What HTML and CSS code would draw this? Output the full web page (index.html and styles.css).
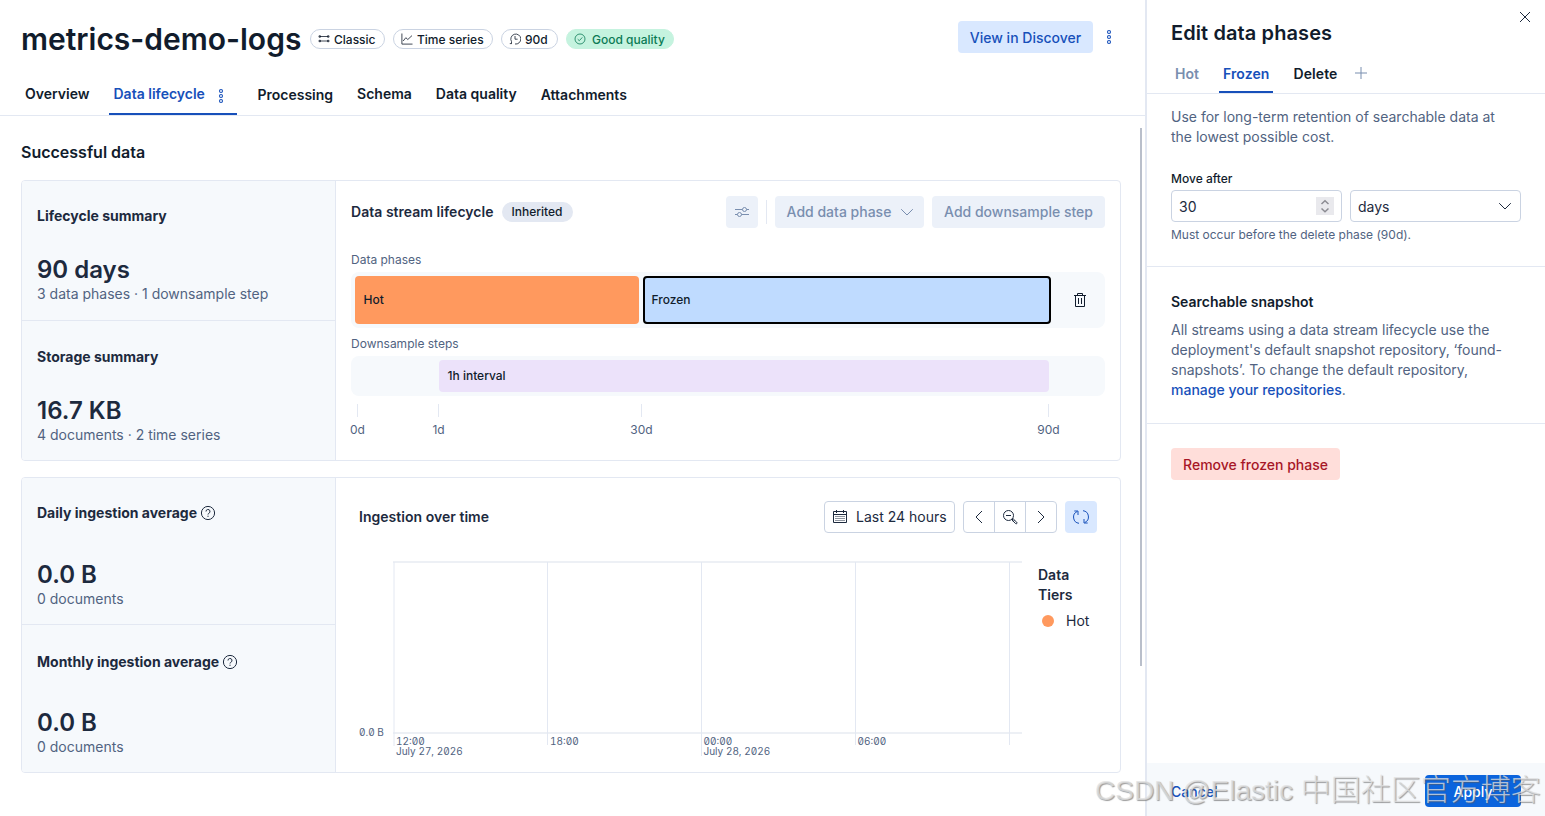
FILE: index.html
```html
<!DOCTYPE html>
<html lang="en">
	<head>
		<meta charset="utf-8">
		<title>metrics-demo-logs - Streams</title>
		<link rel="stylesheet" href="styles.css">
	</head>
	<body>

		<!--
			Stream page: header, tabs and the lifecycle panels
		-->

		<main>
			<header>
				<div class="titleRow">
					<h1>metrics-demo-logs</h1>
					<span class="badge classic">
						<svg width="12" height="12" viewBox="0 0 12 12"><path d="M1.5 3.500h9M1.500 8h9"/><path d="M1 2.800h1.500v1.400H1zM9.500 2.800H11v1.400H9.500zM1 7.300h1.500v1.400H1zM9.500 7.300H11v1.400H9.500z"/></svg>
						Classic
					</span>
					<span class="badge series">
						<svg width="12" height="12" viewBox="0 0 12 12"><path d="M.9.5v10.600h10.600M2.200 8l2.600-3.300 2 1.800L11 2.600"/></svg>
						Time series
					</span>
					<span class="badge retention">
						<svg width="12" height="12" viewBox="0 0 12 12"><path d="M2.500 10.600v-2A5 5 0 1 1 6 11M.8 10.600h2M6 3v3.200h2.600"/></svg>
						90d
					</span>
					<span class="badge good">
						<svg width="12" height="12" viewBox="0 0 12 12"><circle cx="6" cy="6" r="5"/><path d="M3.700 6.200l1.600 1.500 3-3.300"/></svg>
						Good quality
					</span>
					<button class="btn discover">View in Discover</button>
					<svg class="dots" width="8" height="16" viewBox="0 0 8 16"><circle cx="4" cy="3" r="1.500"/><circle cx="4" cy="8" r="1.500"/><circle cx="4" cy="13" r="1.500"/></svg>
				</div>
				<nav class="tabs">
					<a>Overview</a>
					<a class="active">Data lifecycle
						<svg class="dots" width="8" height="16" viewBox="0 0 8 16"><circle cx="4" cy="3" r="1.500"/><circle cx="4" cy="8" r="1.500"/><circle cx="4" cy="13" r="1.500"/></svg>
					</a>
					<a class="low">Processing</a>
					<a>Schema</a>
					<a>Data quality</a>
					<a class="low">Attachments</a>
				</nav>
			</header>

			<div class="content">
				<h2>Successful data</h2>

				<section class="panel lifecycle">
					<div class="side">
						<div class="stat">
							<h3>Lifecycle summary</h3>
							<strong>90 days</strong>
							<p>3 data phases · 1 downsample step</p>
						</div>
						<div class="stat">
							<h3>Storage summary</h3>
							<strong>16.7 KB</strong>
							<p>4 documents · 2 time series</p>
						</div>
					</div>
					<div class="main">
						<div class="toolbar">
							<h3>Data stream lifecycle</h3>
							<span class="pill">Inherited</span>
							<button class="btn off icon">
								<svg width="16" height="16" viewBox="0 0 16 16"><path d="M1 5.500h7.500M12.500 5.500H15M1 10.500h2.500M7.500 10.500H15"/><circle cx="10.500" cy="5.500" r="2"/><circle cx="5.500" cy="10.500" r="2"/></svg>
							</button>
							<span class="rule"></span>
							<button class="btn off phase">Add data phase
								<svg width="16" height="16" viewBox="0 0 16 16"><path d="M2.200 5.200L8 11l5.800-5.800"/></svg>
							</button>
							<button class="btn off step">Add downsample step</button>
						</div>

						<p class="label">Data phases</p>
						<div class="track phases">
							<div class="hot">Hot</div>
							<div class="frozen">Frozen</div>
							<svg width="16" height="16" viewBox="0 0 16 16"><path d="M2 3.500h12M5.500 3.500v-2h5v2M3.500 3.500v11h9v-11M6.500 6v6M9.500 6v6"/></svg>
						</div>
						<p class="label">Downsample steps</p>
						<div class="track steps">
							<div class="interval">1h interval</div>
						</div>
						<div class="scale">
							<span>0d</span>
							<span>1d</span>
							<span>30d</span>
							<span>90d</span>
						</div>
					</div>
				</section>

				<section class="panel ingestion">
					<div class="side">
						<div class="stat">
							<h3>Daily ingestion average
								<svg width="16" height="16" viewBox="0 0 16 16"><circle cx="8" cy="8" r="6.600"/><path d="M6 6.500a2 2 0 1 1 2.800 1.800q-.8.400-.8 1.200M8 10.700v1.200"/></svg>
							</h3>
							<strong>0.0 B</strong>
							<p>0 documents</p>
						</div>
						<div class="stat">
							<h3>Monthly ingestion average
								<svg width="16" height="16" viewBox="0 0 16 16"><circle cx="8" cy="8" r="6.600"/><path d="M6 6.500a2 2 0 1 1 2.800 1.800q-.8.400-.8 1.200M8 10.700v1.200"/></svg>
							</h3>
							<strong>0.0 B</strong>
							<p>0 documents</p>
						</div>
					</div>
					<div class="main">
						<div class="toolbar">
							<h3>Ingestion over time</h3>
							<button class="range">
								<svg width="16" height="16" viewBox="0 0 16 16"><path d="M1.500 2.500h13v11h-13zM1.500 5.500h13M4.500 1v3M11.500 1v3"/><path class="grid" d="M3.500 7.500h10M3.500 9.500h10M3.500 11.500h10"/></svg>
								Last 24 hours
							</button>
							<div class="group">
								<button><svg width="16" height="16" viewBox="0 0 16 16"><path d="M11 2L5 8l6 6"/></svg></button>
								<button><svg width="16" height="16" viewBox="0 0 16 16"><circle cx="6.500" cy="6.500" r="5"/><path d="M4 6.500h5M10 11l1.200-1.200 3.600 3.600a.85.850 0 0 1-1.200 1.200zM11.300 12.300l1.200-1.200"/></svg></button>
								<button><svg width="16" height="16" viewBox="0 0 16 16"><path d="M5 2l6 6-6 6"/></svg></button>
							</div>
							<button class="btn refresh">
								<svg width="16" height="16" viewBox="0 0 16 16"><path d="M6 14.300A6.200 6.200 0 0 1 4.200 2.500M1.300 2h3.700v4M10 1.700a6.200 6.200 0 0 1 1.800 11.800M14.700 14H11v-4"/></svg>
							</button>
						</div>

						<!--
							Empty chart: grid lines and time axis only
						-->

						<div class="chart">
							<svg width="663" height="196" viewBox="0 0 663 196">
								<path class="frame" d="M34 6h629M34 177h629"/>
								<path class="ticks" d="M35 6v184M188.500 6v183M342.500 6v194M496.500 6v183M650.500 6v183"/>
								<text x="0" y="180">0.0 B</text>
								<text x="37" y="189">12:00</text>
								<text x="37" y="199">July 27, 2026</text>
								<text x="191" y="189">18:00</text>
								<text x="344.500" y="189">00:00</text>
								<text x="344.500" y="199">July 28, 2026</text>
								<text x="498.500" y="189">06:00</text>
							</svg>
							<div class="legend">
								<h3>Data<br>Tiers</h3>
								<p><i></i>Hot</p>
							</div>
						</div>
					</div>
				</section>
			</div>
			<div class="scrollbar"></div>
		</main>

		<!--
			Flyout for editing the phases
		-->

		<aside>
			<svg class="close" width="16" height="16" viewBox="0 0 16 16"><path d="M3 3l10 10M13 3L3 13"/></svg>
			<h2>Edit data phases</h2>
			<nav>
				<a class="muted">Hot</a>
				<a class="active">Frozen</a>
				<a>Delete</a>
				<svg width="16" height="16" viewBox="0 0 16 16"><path d="M8 2v12M2 8h12"/></svg>
			</nav>
			<div class="block move">
				<p>Use for long-term retention of searchable data at<br>the lowest possible cost.</p>
				<label>Move after</label>
				<div class="fields">
					<div class="field">30
						<span class="spin"><svg width="18" height="18" viewBox="0 0 18 18"><path d="M5.500 7L9 3.800 12.500 7M5.500 11.500L9 14.700l3.500-3.200"/></svg></span>
					</div>
					<div class="field">days
						<svg width="16" height="16" viewBox="0 0 16 16"><path d="M2.200 5.200L8 11l5.800-5.800"/></svg>
					</div>
				</div>
				<small>Must occur before the delete phase (90d).</small>
			</div>
			<div class="block snapshot">
				<h3>Searchable snapshot</h3>
				<p>All streams using a data stream lifecycle use the deployment's default snapshot repository, ‘found-snapshots’. To change the default repository, <a>manage your repositories</a>.</p>
			</div>
			<div class="block remove">
				<button class="btn danger">Remove frozen phase</button>
			</div>
			<footer>
				<a>Cancel</a>
				<button class="btn apply">Apply</button>
			</footer>
		</aside>

		<div class="watermark">CSDN @Elastic <span>中国社区官方博客</span></div>

	</body>
</html>
```
FILE: styles.css
```css
/*
	page basics
*/

* {
	box-sizing: border-box;
}

body {
	margin: 0;
	width: 1545px;
	height: 816px;
	display: flex;
	position: relative;
	overflow: hidden;
	font-family: Inter, sans-serif;
	font-size: 14px;
	line-height: 20px;
	color: #1d2a3e;
	background: #fff;
}

h1, h2, h3, p {
	margin: 0;
}

h3 {
	font-size: 14px;
	font-weight: 600;
	line-height: 20px;
}

svg {
	flex: none;
	fill: none;
	stroke: currentColor;
	stroke-width: 1;
}

button {
	font: inherit;
	color: inherit;
	border: 0;
	padding: 0;
	background: none;
}

.btn {
	display: flex;
	align-items: center;
	justify-content: center;
	height: 32px;
	border-radius: 4px;
	font-weight: 500;
	white-space: nowrap;
}

/*
	stream header
*/

main {
	width: 1145px;
	position: relative;
	flex: none;
}

header {
	height: 116px;
	border-bottom: 1px solid #e3e8f2;
}

.titleRow {
	display: flex;
	align-items: center;
	height: 78px;
	padding-left: 21px;
}

h1 {
	width: 289px;
	font-size: 30px;
	line-height: 40px;
	font-weight: 600;
	color: #111c2c;
	white-space: nowrap;
}

.badge {
	display: flex;
	align-items: center;
	gap: 4px;
	height: 20px;
	margin-right: 8px;
	padding: 1px 0 0 7px;
	border: 1px solid #cad3e2;
	border-radius: 10px;
	font-size: 12px;
	font-weight: 500;
	line-height: 19px;
	color: #111c2c;
	white-space: nowrap;
}

.badge svg {
	margin-top: -1px;
	stroke-width: 0.8;
}

.classic {
	width: 75px;
}

.series {
	width: 100px;
}

.retention {
	width: 57px;
}

.good {
	width: 108px;
	gap: 6px;
	border-color: #c5f3df;
	background: #c5f3df;
	color: #0b7a55;
}

.discover {
	width: 135px;
	margin: -4px 12px 0 auto;
	padding-top: 2px;
	background: #d9e8ff;
	color: #1750ba;
}

.dots {
	color: #1750ba;
	stroke-width: 1.1;
}

.titleRow .dots {
	margin: -4px 32px 0 0;
}

.tabs {
	display: flex;
	gap: 16px;
	height: 37px;
	padding-left: 21px;
}

.tabs a {
	padding: 6px 4px 0;
	font-weight: 600;
	color: #111c2c;
	white-space: nowrap;
}

.tabs .low {
	padding-top: 7px;
}

.tabs .active {
	display: flex;
	width: 128px;
	color: #1750ba;
	border-bottom: 2px solid #1750ba;
}

.tabs .dots {
	margin: 4px 0 0 12px;
}

/*
	panels
*/

.content {
	padding: 26px 24px 0 21px;
}

.content h2 {
	font-size: 16px;
	font-weight: 600;
	line-height: 20px;
	color: #111c2c;
}

.panel {
	display: flex;
	width: 1100px;
	border: 1px solid #e3e8f2;
	border-radius: 4px;
	overflow: hidden;
}

.lifecycle {
	height: 281px;
	margin: 18px 0 16px;
}

.ingestion {
	height: 296px;
}

.side {
	width: 314px;
	flex: none;
	background: #f6f9fc;
	border-right: 1px solid #e3e8f2;
}

.stat {
	height: 140px;
	padding: 25px 15px 0;
	border-bottom: 1px solid #e3e8f2;
}

.stat + .stat {
	padding-top: 26px;
	border-bottom: 0;
}

.stat h3 {
	display: flex;
	align-items: center;
	gap: 3px;
	font-weight: 700;
}

.stat strong {
	display: block;
	margin-top: 27px;
	font-size: 24px;
	line-height: 34px;
	font-weight: 600;
}

.stat p {
	margin-top: -3px;
	color: #516381;
}

.ingestion .stat {
	height: 147px;
}

.ingestion .stat strong {
	margin-top: 35px;
}

.ingestion .stat + .stat {
	padding-top: 27px;
}

.ingestion .stat + .stat strong {
	margin-top: 34px;
}

.main {
	flex: 1;
	padding: 15px;
}

.toolbar {
	display: flex;
	align-items: center;
	height: 32px;
}

.toolbar h3 {
	letter-spacing: 0.03px;
}

.pill {
	margin: 0 auto 0 8px;
	padding: 0 10px;
	border-radius: 10px;
	background: #e3e8f2;
	font-size: 12px;
	font-weight: 500;
	color: #111c2c;
}

.off {
	background: #ecf1f9;
	color: #798eaf;
}

.icon {
	width: 32px;
}

.rule {
	width: 1px;
	height: 24px;
	margin: 0 8px;
	background: #e3e8f2;
}

.phase {
	width: 149px;
	gap: 8px;
	margin-right: 8px;
	padding-left: 3px;
}

.step {
	width: 173px;
}

.label {
	height: 28px;
	padding-top: 6px;
	font-size: 12px;
	line-height: 20px;
	color: #516381;
}

.toolbar + .label {
	height: 44px;
	padding-top: 22px;
}

.track {
	display: flex;
	gap: 4px;
	padding: 4px;
	border-radius: 8px;
	background: #f6f9fc;
	font-size: 12px;
	font-weight: 500;
	color: #111c2c;
}

.track div {
	display: flex;
	align-items: center;
	padding-left: 8.5px;
	border-radius: 4px;
}

.phases {
	height: 56px;
	align-items: center;
}

.phases div {
	height: 48px;
}

.hot {
	width: 284px;
	background: #ff995e;
}

.track .frozen {
	width: 408px;
	margin-right: 17px;
	padding-left: 6.5px;
	border: 2px solid #000;
	background: #bfdbff;
}

.steps {
	height: 40px;
}

.interval {
	width: 610px;
	margin-left: 84px;
	background: #ece2fa;
}

/*
	days scale: the tick stands over the middle of each label
*/

.scale {
	display: grid;
	grid-template-columns: 81px 203px 407px 30px;
	margin: 8px 0 0 -9px;
	font-size: 12px;
	color: #516381;
}

.scale span {
	width: 31px;
	text-align: center;
}

.scale span::before {
	content: "";
	display: block;
	width: 1px;
	height: 13px;
	margin: 0 0 3px 15px;
	background: #e3e8f2;
}

/*
	ingestion chart
*/

.ingestion .main {
	padding: 23px 23px 0;
}

.range {
	display: flex;
	align-items: center;
	gap: 8px;
	width: 131px;
	height: 32px;
	margin: 0 8px 0 auto;
	padding-left: 7px;
	border: 1px solid #cad3e2;
	border-radius: 4px;
	white-space: nowrap;
}

.grid {
	stroke-dasharray: 1 1;
}

.group {
	display: flex;
	width: 94px;
	height: 32px;
	margin-right: 8px;
	border: 1px solid #cad3e2;
	border-radius: 4px;
}

.group button {
	display: flex;
	align-items: center;
	justify-content: center;
	flex: 1;
}

.group button + button {
	border-left: 1px solid #cad3e2;
}

.refresh {
	width: 32px;
	background: #d9e8ff;
	color: #1750ba;
}

.chart {
	display: flex;
	margin-top: 23px;
}

.chart svg {
	overflow: visible;
}

.frame {
	stroke: #edf0f5;
	stroke-width: 2;
}

.ticks {
	stroke: #e3e8f2;
}

.chart text {
	fill: #516381;
	stroke: none;
	font-size: 10px;
	font-variant-numeric: slashed-zero tabular-nums;
}

.legend {
	padding: 9px 0 0 16px;
}

.legend p {
	display: flex;
	align-items: center;
	gap: 12px;
	margin: 6px 0 0 4px;
}

.legend i {
	width: 12px;
	height: 12px;
	border-radius: 50%;
	background: #ff995e;
}

.scrollbar {
	position: absolute;
	left: 1140px;
	top: 128px;
	width: 2px;
	height: 538px;
	background: #b9bfcb;
}

/*
	flyout
*/

aside {
	display: flex;
	flex-direction: column;
	width: 400px;
	height: 816px;
	position: relative;
	border-left: 2px solid #e3e8f2;
}

.close {
	position: absolute;
	right: 12px;
	top: 9px;
}

aside h2 {
	padding: 20px 0 0 24px;
	font-size: 20px;
	font-weight: 600;
	line-height: 26px;
	letter-spacing: 0.1px;
	color: #111c2c;
}

aside nav {
	display: flex;
	gap: 16px;
	height: 48px;
	padding-left: 24px;
	border-bottom: 1px solid #e3e8f2;
}

aside nav a {
	padding: 18px 4px 0;
	font-weight: 600;
	letter-spacing: 0.1px;
	color: #111c2c;
}

aside nav .muted {
	letter-spacing: 0;
	color: #798eaf;
}

aside nav .active {
	color: #1750ba;
	border-bottom: 2px solid #1750ba;
}

aside nav svg {
	margin: 19px 0 0 -4px;
	color: #798eaf;
}

.block {
	padding: 0 24px;
	border-bottom: 1px solid #e3e8f2;
}

.block p {
	color: #516381;
}

.move {
	height: 173px;
	padding-top: 13px;
}

.move label {
	display: block;
	margin-top: 23px;
	font-size: 12px;
	font-weight: 500;
	line-height: 18px;
	color: #111c2c;
}

.fields {
	display: flex;
	gap: 8px;
	margin-top: 2px;
}

.field {
	display: flex;
	align-items: center;
	justify-content: space-between;
	flex: 1;
	height: 32px;
	padding: 1px 7px 0;
	border: 1px solid #cad3e2;
	border-radius: 4px;
}

.field svg {
	margin-top: -1px;
}

.spin {
	width: 18px;
	height: 18px;
	margin-top: -1px;
	background: #e9e9ed;
	color: #8b8b92;
}

.spin svg {
	display: block;
	margin: 0;
	stroke-width: 1.5;
}

.move small {
	display: block;
	margin-top: 3px;
	font-size: 12px;
	line-height: 20px;
	color: #516381;
}

.snapshot {
	height: 157px;
	padding-top: 25px;
}

.snapshot h3 {
	color: #111c2c;
}

.snapshot p {
	margin-top: 8px;
}

.snapshot a {
	font-weight: 500;
	color: #1750ba;
}

.remove {
	padding-top: 24px;
	border: 0;
}

.danger {
	width: 169px;
	padding-top: 2px;
	background: #ffdeda;
	color: #a71627;
}

footer {
	display: flex;
	align-items: center;
	justify-content: space-between;
	height: 53px;
	margin-top: auto;
	padding: 3px 24px 0;
	background: #f6f9fc;
}

footer a {
	padding-top: 2px;
	font-weight: 500;
	color: #1750ba;
}

.apply {
	width: 96px;
	padding-top: 2px;
	background: #0b64dd;
	color: #fff;
}

.watermark {
	position: absolute;
	left: 1095px;
	top: 770px;
	font-family: "Liberation Sans", "Noto Sans CJK SC", sans-serif;
	font-size: 28px;
	line-height: 40px;
	font-weight: 300;
	white-space: nowrap;
	color: rgba(225, 225, 225, 0.75);
	text-shadow: 1px 1px 1px rgba(90, 90, 90, 0.6);
}

.watermark span {
	font-size: 30px;
}
```
